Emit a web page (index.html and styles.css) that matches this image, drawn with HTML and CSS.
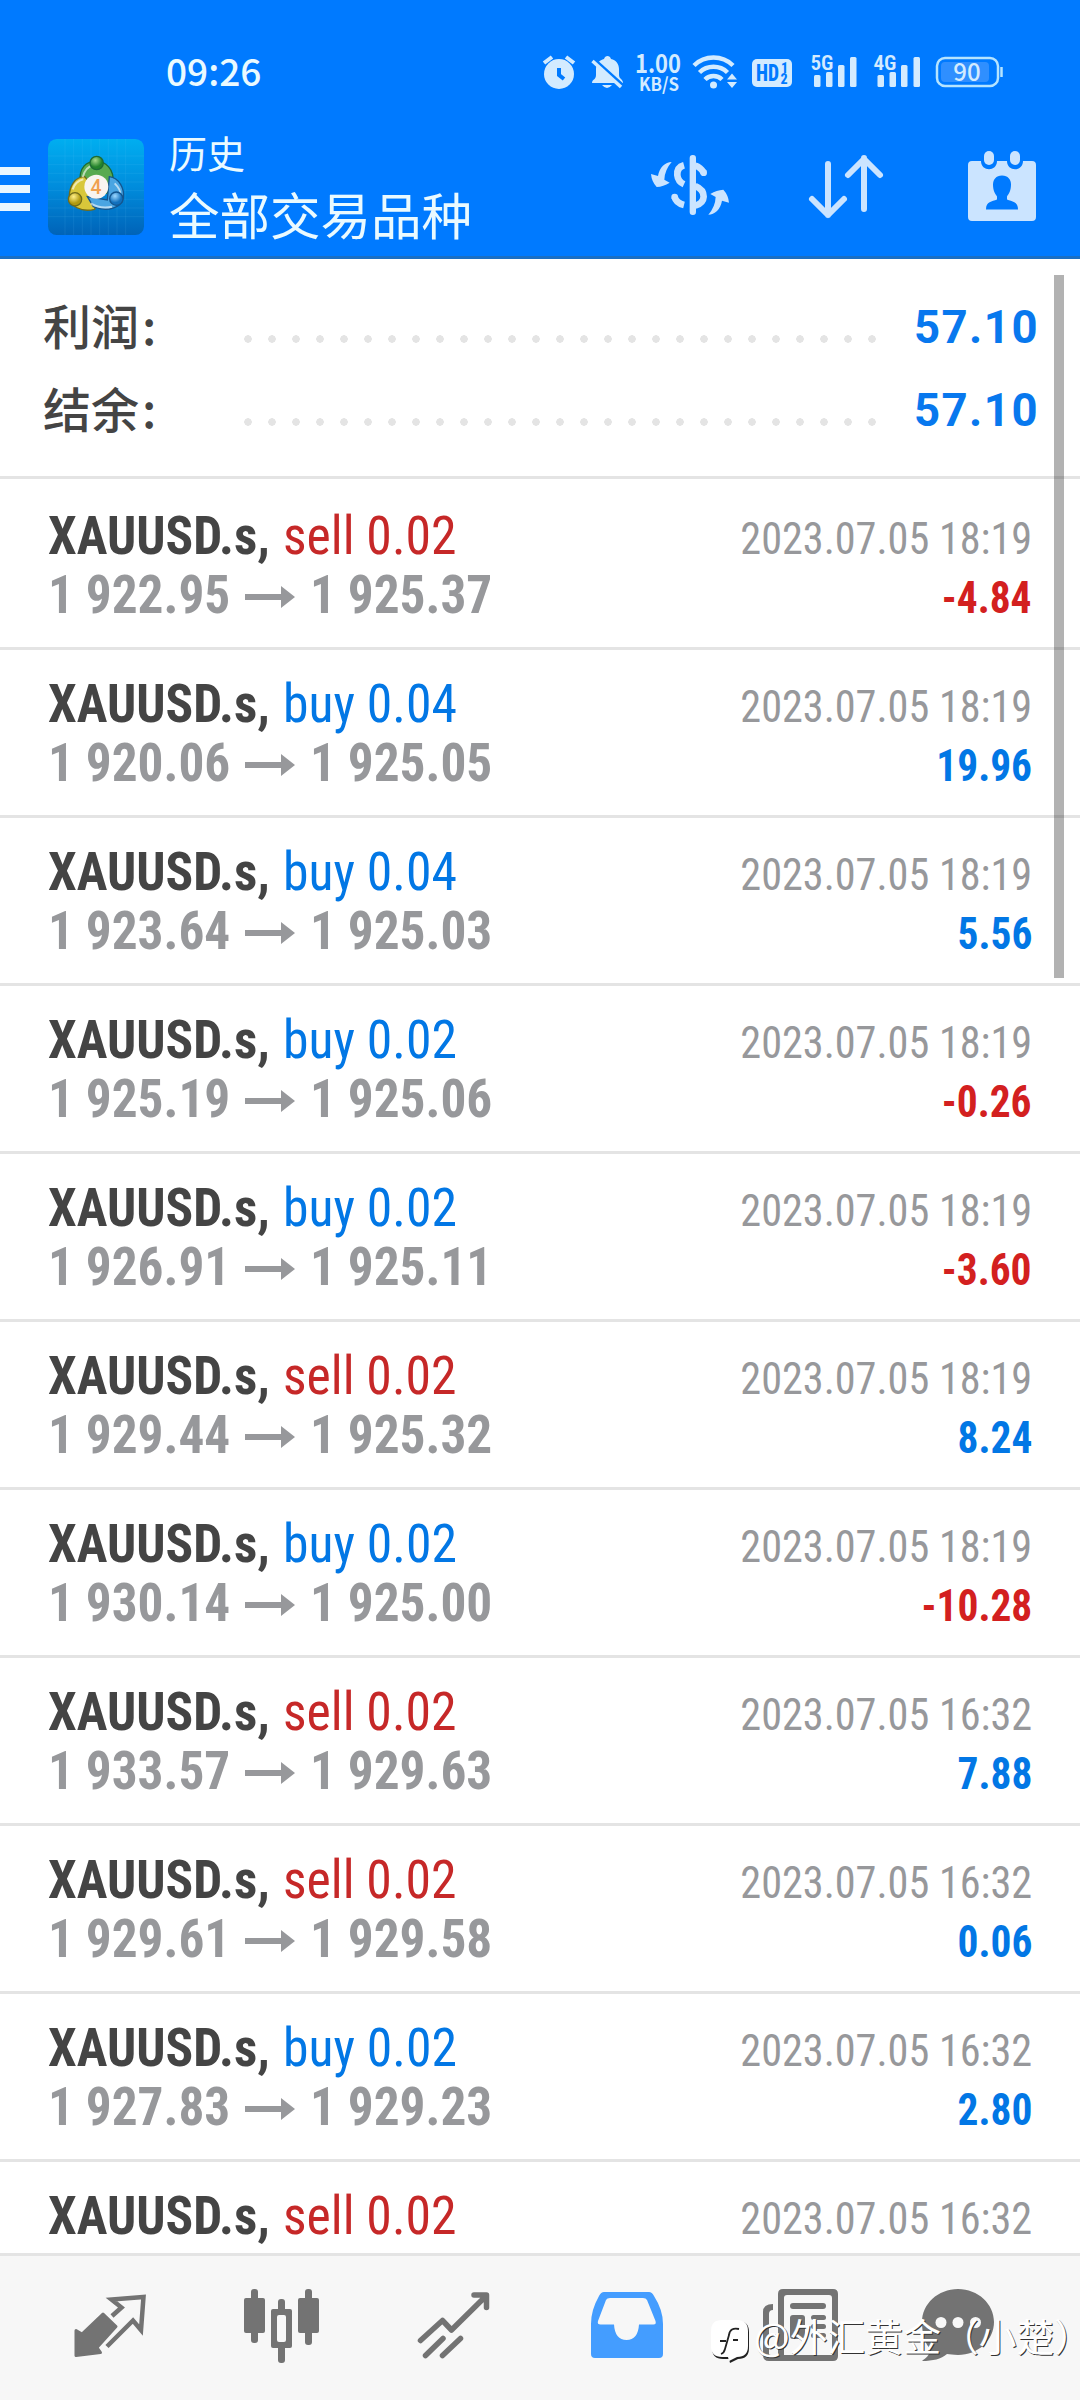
FILE: index.html
```html
<!DOCTYPE html>
<html lang="zh-CN">
<head>
<meta charset="utf-8">
<title>历史</title>
<link rel="stylesheet" href="styles.css">
</head>
<body>
<div class="app">
  <header class="header">
    <div class="status">
      <span class="clock">09:26</span>
      <svg class="status-icons" viewBox="540 45 470 50" width="470" height="50">
        <g fill="#d3ebff">
          <circle cx="559" cy="74" r="15"/>
          <path d="M544 63l8-6M574 63l-8-6" stroke="#d3ebff" stroke-width="4"/>
          <path d="M559 68v7l5 4" stroke="#007aff" stroke-width="4" fill="none"/>
          <path d="M592 83c0-4 4-3 4-8v-6c0-6 4-9 8-10 1-4 6-4 7 0 5 1 8 5 8 10v6c0 4 4 4 4 8zM602 85h10q-5 6-10 0z"/>
          <path d="M591.500 57.500l31 28" stroke="#007aff" stroke-width="4"/>
          <path d="M592.500 61l28.500 26" stroke="#d3ebff" stroke-width="3.500"/>
          <text class="speed" x="658" y="72.500" font-size="25" text-anchor="middle" textLength="46" lengthAdjust="spacingAndGlyphs">1.00</text>
          <text class="speed" x="659" y="90.500" font-size="18" text-anchor="middle" textLength="40" lengthAdjust="spacingAndGlyphs">KB/S</text>
          <g fill="none" stroke="#d3ebff" stroke-width="4.500">
            <path d="M694 65.500a28 28 0 0 1 39 0M699.500 72.500a20 20 0 0 1 28 0M705 79.500a12 12 0 0 1 17 0"/>
          </g>
          <circle cx="713.500" cy="85" r="3.500"/>
          <path d="M727 79.500l5-6 5 6zM727 82l5 6 5-6z"/>
          <rect x="752" y="59" width="40" height="28" rx="5"/>
          <g fill="#007aff" class="hd">
            <text x="756" y="81" font-size="24" textLength="23" lengthAdjust="spacingAndGlyphs">HD</text>
            <text x="781" y="73" font-size="14">1</text>
            <text x="780.500" y="84" font-size="14">2</text>
          </g>
          <text class="net" x="810.500" y="70" font-size="21" textLength="23" lengthAdjust="spacingAndGlyphs">5G</text>
          <rect x="814" y="75" width="6.500" height="12" rx="1.500"/><rect x="826" y="72" width="6.500" height="15" rx="1.500"/><rect x="838" y="65" width="6.500" height="22" rx="1.500"/><rect x="850" y="57" width="6.500" height="30" rx="1.500"/>
          <text class="net" x="873.500" y="70" font-size="21" textLength="23" lengthAdjust="spacingAndGlyphs">4G</text>
          <rect x="877.500" y="75" width="6.500" height="12" rx="1.500"/><rect x="889.500" y="72" width="6.500" height="15" rx="1.500"/><rect x="901" y="65" width="6.500" height="22" rx="1.500"/><rect x="913.500" y="57" width="6.500" height="30" rx="1.500"/>
          <rect x="937" y="58" width="61" height="28" rx="8" fill="none" stroke="#b5e4ff" stroke-width="2.500"/>
          <rect x="941" y="62" width="48" height="20" rx="4" fill="#2f8fff"/>
          <path d="M1001.500 67v10" stroke="#b5e4ff" stroke-width="2.500"/>
          <text class="speed battery" x="967" y="80.500" font-size="24" text-anchor="middle">90</text>
        </g>
      </svg>
    </div>
    <div class="toolbar">
      <svg class="menu" viewBox="0 0 30 44" width="30" height="44" fill="#eaf6ff"><path d="M0 0h30v8H0zM0 18h30v8H0zM0 36h30v8H0z"/></svg>
      <svg class="logo" viewBox="144 57 288 288" width="96" height="96">
        <defs>
          <linearGradient id="sky" x1="0" y1="0" x2="0" y2="1"><stop offset="0" stop-color="#00aef0"/><stop offset=".5" stop-color="#008cdc"/><stop offset="1" stop-color="#0063b8"/></linearGradient>
          <radialGradient id="green" cx=".4" cy=".3"><stop offset="0" stop-color="#a5d98c"/><stop offset="1" stop-color="#23832c"/></radialGradient>
          <radialGradient id="gold" cx=".4" cy=".3"><stop offset="0" stop-color="#fff08a"/><stop offset="1" stop-color="#b19a10"/></radialGradient>
          <radialGradient id="blue" cx=".4" cy=".3"><stop offset="0" stop-color="#9ed8ff"/><stop offset="1" stop-color="#1170bd"/></radialGradient>
        </defs>
        <rect x="144" y="57" width="288" height="288" rx="26" fill="url(#sky)"/>
        <path d="M195 57v288M221 57v288M247 57v288M273 57v288M299 57v288M325 57v288M351 57v288M377 57v288M144 108h288M144 134h288M144 160h288M144 186h288M144 212h288M144 238h288M144 264h288M144 290h288" stroke="#6fd0ff" stroke-opacity=".16" stroke-width="2"/>
        <g stroke-width="4">
          <path d="M240 190c-4-50 20-66 48-66s54 20 52 66l-20 30h-60z" fill="#58aa50" stroke="#1d6b35"/>
          <path d="M254 170c-30 0-46 30-46 60 0 28 36 48 76 38l10-50z" fill="#d8c73a" stroke="#716c1b"/>
          <path d="M328 170c30 4 46 36 42 64-6 28-46 44-90 26l-18-30 60 10z" fill="#4aa5e2" stroke="#14568f"/>
          <path d="M248 172q8-32 34-38M218 208q8-24 32-30M344 190q20 20 16 34M272 250q30 18 64 10" fill="none" stroke="#fff" stroke-opacity=".6" stroke-width="6"/>
          <circle cx="290" cy="129" r="20" fill="url(#green)" stroke="#1d6b35"/>
          <circle cx="225" cy="238" r="20" fill="url(#gold)" stroke="#716c1b"/>
          <circle cx="349" cy="236" r="20" fill="url(#blue)" stroke="#14568f"/>
        </g>
        <circle cx="289" cy="200" r="36" fill="#f8f4f0"/>
        <text class="four" x="288" y="221" font-size="58" text-anchor="middle">4</text>
      </svg>
      <div class="titles">
        <div class="subtitle">历史</div>
        <div class="title">全部交易品种</div>
      </div>
      <svg class="actions" viewBox="640 145 400 80" width="400" height="80" fill="#cbe4ff">
        <g transform="translate(640 140) scale(.3333)">
          <path id="swirl" d="M95 66C76 66 58 82 54 108L33 102Q35 125 50 141Q70 140 89 128L73 119Q74 90 95 66Z"/>
          <use href="#swirl" transform="rotate(180 150 145)"/>
          <rect x="149" y="45" width="19" height="180" rx="9"/>
          <g fill="none" stroke="#cbe4ff" stroke-width="20">
            <path d="M132 76Q110 82 112 106Q114 125 132 133M166 77Q182 82 191 98M166 138Q191 148 191 170Q190 190 166 197M104 171Q108 189 132 195"/>
          </g>
          <circle cx="191" cy="98" r="10"/><circle cx="104" cy="171" r="10"/>
        </g>
        <path d="M828 164v51M812 199l16 16 16-16M864 209v-51M848 175l16-16 16 16" fill="none" stroke="#cbe4ff" stroke-width="6" stroke-linecap="round" stroke-linejoin="round"/>
        <path d="M972 161h9c0 11 16 11 16 0h10c0 11 16 11 16 0h9q4 0 4 4v52q0 4-4 4h-60q-4 0-4-4v-52q0-4 4-4z"/>
        <rect x="984" y="151" width="10" height="14" rx="5"/><rect x="1010" y="151" width="10" height="14" rx="5"/>
        <path d="M1002 175.500c6 0 9 4 9 9 0 6-2 9-4 12v3c5 2 11 2 11 10h-32c0-8 6-8 11-10v-3c-2-3-4-6-4-12 0-5 3-9 9-9z" fill="#007aff"/>
      </svg>
    </div>
  </header>

  <main class="content">
    <section class="summary">
      <div class="sum-row"><span class="sum-label">利润<i>:</i></span><span class="dots"></span><span class="sum-value">57.10</span></div>
      <div class="sum-row"><span class="sum-label">结余<i>:</i></span><span class="dots"></span><span class="sum-value">57.10</span></div>
    </section>
    <section class="deals" id="deals"></section>
    <div class="scrollbar"></div>
  </main>

  <nav class="tabs">
    <svg viewBox="24 2256 172 144"><path d="M76 2330.500l6 3.500 21-20 13 12.500-19 21 3.500 5-24.500 3z" fill="#737373" stroke="#737373" stroke-width="3" stroke-linejoin="round"/><path d="M112 2316l9.500-8.500-10-8 32-2.500-2.500 33-8-9.500-26 26" fill="none" stroke="#737373" stroke-width="4.500"/></svg>
    <svg viewBox="196 2256 172 144" fill="#737373"><rect x="244" y="2298" width="21" height="35" rx="2"/><rect x="251" y="2289" width="7" height="54" rx="3"/><rect x="298" y="2298" width="21" height="35" rx="2"/><rect x="305" y="2289" width="7" height="56" rx="3"/><rect x="278" y="2299" width="7" height="64" rx="3"/><rect x="271" y="2309" width="21" height="39" rx="2"/><rect x="277" y="2315" width="9" height="27" rx="2" fill="#f7f7f7"/></svg>
    <svg viewBox="368 2256 172 144" fill="none" stroke="#737373" stroke-width="5.500" stroke-linejoin="round"><path stroke-linecap="round" d="M420.500 2340.500l22-20 9 9.500 34.500-34M474 2295h12.500v12.500M443 2338.500l-17.500 17M460.500 2338.500l-18 17"/></svg>
    <svg viewBox="540 2256 172 144"><path fill="#449dff" fill-rule="evenodd" d="M604 2292h45q3 0 5 4 9 14 9 28v30q0 4-4 4h-64q-4 0-4-4v-30q0-14 8-28 2-4 5-4zM610 2298h33q3 0 4 2l8.500 21q1 3.500-2 3.500h-14.500q-1 15.500-12.500 15.500t-12.500-15.500h-13.500q-3.500 0-2.500-3.500l8-21q1-2 4-2z"/></svg>
    <svg viewBox="712 2256 172 144" fill="#737373"><path fill-rule="evenodd" d="M783 2289h50q5 0 5 5v62q0 5-5 5h-64q-6 0-6-6v-43q0-8 10-8v6q-4 0-4 4v40q0 1 2 1h7v-61q0-5 5-5zM787 2295q-3 0-3 3v57h48v-57q0-3-3-3z"/><rect x="790" y="2303" width="36" height="6" rx="3"/><rect x="790" y="2315" width="15" height="24" rx="3"/><rect x="811" y="2315" width="15" height="5" rx="2.500"/><rect x="811" y="2324" width="15" height="5" rx="2.500"/><rect x="811" y="2333" width="15" height="5" rx="2.500"/></svg>
    <svg viewBox="884 2256 172 144" fill="#737373"><path d="M958 2289c20 0 36 15 36 33s-16 33-36 33c-5 0-8-1-11-1-6 5-14 7-25 7 4-3 8-6 8-12-5-6-8-15-8-27 0-18 16-33 36-33z"/><g fill="#f7f7f7"><circle cx="941" cy="2322.500" r="5.500"/><circle cx="958" cy="2322.500" r="5.500"/><circle cx="975.500" cy="2322.500" r="5.500"/></g></svg>
  </nav>

  <div class="watermark">
    <svg viewBox="710 2316 42 50" width="42" height="50">
      <path d="M723 2321h15q11 0 11 11v16q0 11-11 11l-8 4-1-4h-6q-11 0-11-11v-16q0-11 11-11z" fill="#222"/>
      <path d="M722 2320h15q11 0 11 11v15q0 11-11 11l-8 4-1-4h-6q-11 0-11-11v-15q0-11 11-11z" fill="#fff"/>
      <path d="M739 2329q-9-2-10 6l-4 14q-1 4-4 5M720 2341h6M733 2340h5" fill="none" stroke="#222" stroke-width="1.800"/>
    </svg>
    <span>@外汇黄金（小楚）</span>
  </div>
</div>
<script src="deals.js"></script>
</body>
</html>
```
FILE: deals.js
```js
const deals = [
  ["sell", "0.02", "1 922.95", "1 925.37", "18:19", "-4.84"],
  ["buy", "0.04", "1 920.06", "1 925.05", "18:19", "19.96"],
  ["buy", "0.04", "1 923.64", "1 925.03", "18:19", "5.56"],
  ["buy", "0.02", "1 925.19", "1 925.06", "18:19", "-0.26"],
  ["buy", "0.02", "1 926.91", "1 925.11", "18:19", "-3.60"],
  ["sell", "0.02", "1 929.44", "1 925.32", "18:19", "8.24"],
  ["buy", "0.02", "1 930.14", "1 925.00", "18:19", "-10.28"],
  ["sell", "0.02", "1 933.57", "1 929.63", "16:32", "7.88"],
  ["sell", "0.02", "1 929.61", "1 929.58", "16:32", "0.06"],
  ["buy", "0.02", "1 927.83", "1 929.23", "16:32", "2.80"],
  ["sell", "0.02", "", "", "16:32", ""]
];
const arrow = '<svg class="arrow" viewBox="0 0 50 22" width="50" height="22"><path d="M0 8h36V0l14 11-14 11v-8H0z" fill="#97989b"/></svg>';
document.getElementById("deals").innerHTML = deals.map(([side, lots, open, close, time, profit]) => `
  <article class="deal">
    <div class="line"><span class="symbol">XAUUSD.s,</span><span class="side ${side}">${side} ${lots}</span><span class="time">2023.07.05 ${time}</span></div>
    ${open ? `<div class="line"><span class="price">${open}</span>${arrow}<span class="price">${close}</span><span class="profit ${profit[0] === "-" ? "loss" : "gain"}">${profit}</span></div>` : ""}
  </article>`).join("");
```
FILE: styles.css
```css
* { box-sizing: border-box; }
body { margin: 0; background: #fff; font-family: Roboto, "Noto Sans CJK SC", sans-serif; }
.app { position: relative; width: 1080px; height: 2400px; display: flex; flex-direction: column; overflow: hidden; }
svg { display: block; flex: none; }

.header { flex: none; height: 259px; background: #007aff; border-bottom: 3px solid #1a6fc4; }
.status { display: flex; padding: 45px 0 0 166px; height: 115px; }
.clock { width: 374px; font: 500 37px/51px "Noto Sans CJK SC", sans-serif; color: #eafaff; }
.speed { font-family: "Noto Sans CJK SC", sans-serif; font-weight: 700; }
.battery { font-weight: 500; }
.hd { font-family: "Roboto Condensed", sans-serif; font-weight: 800; }
.net { font-family: "Roboto Condensed", sans-serif; font-weight: 600; }
.toolbar { display: flex; align-items: flex-start; }
.menu { margin-top: 52px; }
.logo { margin: 24px 0 0 18px; }
.four { font-family: Roboto, sans-serif; font-weight: 500; fill: #f0a050; }
.titles { width: 470px; margin: 9px 0 0 25px; color: #eafaff; font-family: "Noto Sans CJK SC", sans-serif; }
.subtitle { font-size: 38px; line-height: 56px; }
.title { font-size: 50.500px; line-height: 66px; }
.actions { margin: 30px 0 0 1px; }

.content { position: relative; flex: 1; overflow: hidden; }
.summary { height: 220px; border-bottom: 3px solid #e4e4e4; padding: 25px 44px 0 43px; }
.sum-row { display: flex; height: 83px; align-items: center; }
.sum-label { width: 193px; font: 500 48px/80px "Noto Sans CJK SC", sans-serif; color: #444; padding-bottom: 3px; }
.sum-label i { font-style: normal; margin-left: 3px; }
.dots { width: 648px; height: 8px; margin-top: 26px; background: radial-gradient(circle at center, #e4e4e4 3.500px, transparent 4px) 0 0 / 24px 8px repeat-x; }
.sum-value { margin-left: auto; font-size: 45.500px; font-weight: 700; line-height: 83px; padding-top: 3px; letter-spacing: 1.500px; margin-right: -3px; color: #0878ee; }

.deals { padding-top: 3px; }
.deal { height: 168px; padding: 24px 48px 0; border-bottom: 3px solid #e4e4e4; font-family: "Roboto Condensed", Roboto, sans-serif; }
.line { display: flex; align-items: baseline; height: 59px; line-height: 59px; font-size: 54px; white-space: nowrap; }
.symbol, .side, .price, .time, .profit { transform: scaleX(.95); transform-origin: left; }
.symbol { width: 235px; font-weight: 700; color: #444; }
.side { font-weight: 400; transform: scaleX(.957); }
.sell { color: #c62828; }
.buy { color: #0277e5; }
.price { width: 196px; font-weight: 700; color: #97989b; }
.arrow { align-self: center; margin: 4px 15px 0 1px; }
.time, .profit { margin-left: auto; font-size: 45px; transform-origin: right; }
.time { color: #97989b; transform: scaleX(.938); }
.profit { font-weight: 700; transform: scaleX(.92); }
.loss { color: #d3201f; }
.gain { color: #0277e5; }
.scrollbar { position: absolute; left: 1054px; top: 16px; width: 10px; height: 703px; background: rgba(0, 0, 0, .3); }

.tabs { flex: none; height: 147px; display: flex; padding-left: 24px; background: #f7f7f7; border-top: 3px solid #e4e4e4; }
.tabs svg { width: 172px; height: 144px; }
.watermark { position: absolute; left: 710px; top: 2316px; display: flex; color: #fff; }
.watermark span { font: 400 37.800px/44px "Noto Sans CJK SC", sans-serif; margin: -3px 0 0 2px; white-space: nowrap; text-shadow: 1px 1px 0 #333; }
```
